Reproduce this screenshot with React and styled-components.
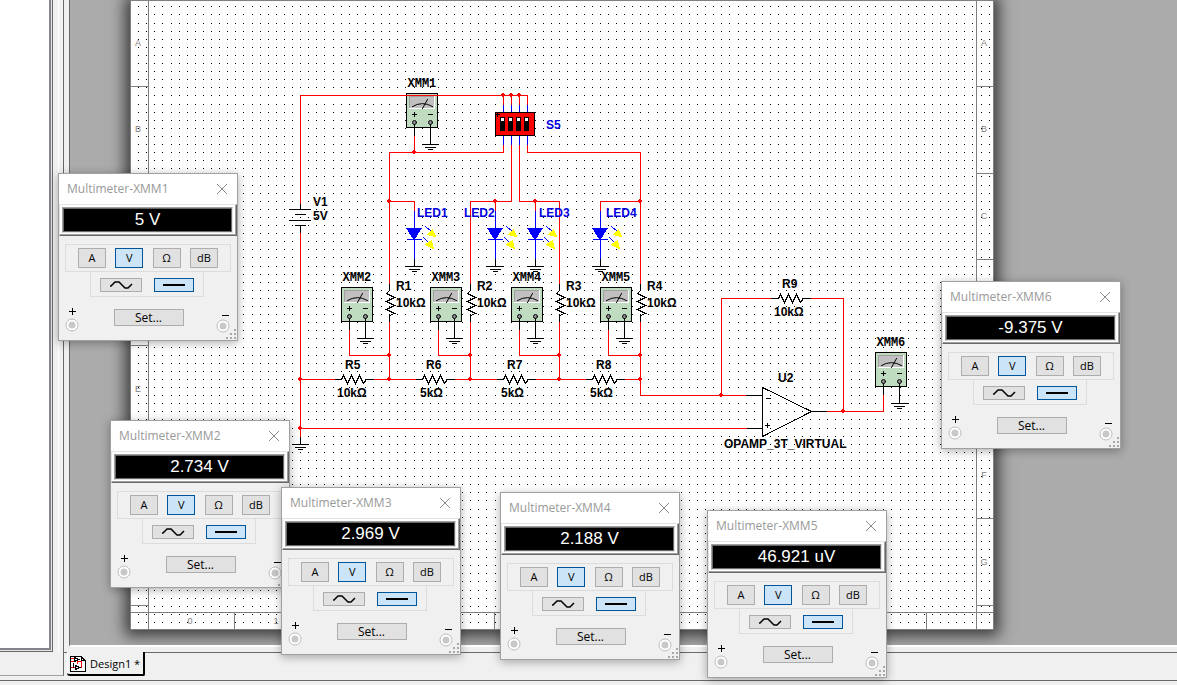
import React from "react";
import styled, { createGlobalStyle } from "styled-components";

const GlobalStyle = createGlobalStyle`
  * {
    box-sizing: border-box;
  }

  body {
    margin: 0;
    background: #f0f0f0;
    font-family: "Open Sans", "Noto Sans", sans-serif;
    font-size: 12px;
    color: #000;
  }
`;

const Page = styled.div`
  position: relative;
  display: flex;
  flex-direction: column;
  height: 100vh;
  overflow: hidden;
  background: #f0f0f0;
`;

const Columns = styled.div`
  display: flex;
  flex: 1;
  min-height: 0;
`;

const SidePane = styled.aside`
  width: 64px;
  flex-shrink: 0;
  margin-bottom: 4px;
  padding-bottom: 23px;
  border-right: 1px solid #696969;
  border-bottom: 1px solid #a0a0a0;
`;

const SideInner = styled.div`
  height: 100%;
  width: 59px;
  padding-right: 5px;
  border-right: 1px solid #fff;
`;

const SideList = styled.div`
  height: 100%;
  background: #fff;
  border: 1px solid #696969;
  border-width: 0 1px 1px 0;
  box-shadow: inset -1px -1px 0 #e3e3e3, inset -3px -3px 0 #84848c;
`;

const Main = styled.main`
  display: flex;
  flex-direction: column;
  flex: 1;
  min-width: 0;
`;

const Workspace = styled.div`
  flex: 1;
  min-height: 0;
  margin-left: 5px;
  padding-left: 60px;
  overflow: hidden;
  background: #ababab;
  border-left: 1px solid #696969;
  border-bottom: 2px solid #fff;
`;

const Sheet = styled.div`
  width: 864px;
  height: 630px;
  background: #fff;
  box-shadow: 0 1px 14px 5px rgba(0, 0, 0, 0.65);

  svg {
    display: block;
  }
`;

const TabBar = styled.nav`
  display: flex;
  height: 28px;
  margin-top: 5px;
  padding-left: 3px;
  background: linear-gradient(#696969, #696969) 0 0 / 100% 1px no-repeat;
`;

const Tab = styled.button`
  display: flex;
  align-items: center;
  gap: 3px;
  height: 24px;
  padding: 0 3px;
  font: inherit;
  font-size: 11px;
  white-space: nowrap;
  background: #f0f0f0;
  border: solid #000;
  border-width: 0 2px 2px 0;
  border-radius: 0 0 2px 3px;
  box-shadow: inset 1px 0 0 #fff;
`;

const StatusBar = styled.footer`
  height: 5px;
  border-top: 1px solid #696969;
`;

const MeterWindow = styled.section`
  position: absolute;
  left: ${props => props.$x}px;
  top: ${props => props.$y}px;
  width: 180px;
  height: 168px;
  display: flex;
  flex-direction: column;
  align-items: center;
  background: #f0f0f0;
  border: 1px solid #a0a0a0;
  box-shadow: 0 2px 9px rgba(0, 0, 0, 0.32);
`;

const TitleBar = styled.header`
  display: flex;
  align-items: center;
  justify-content: space-between;
  width: 100%;
  height: 30px;
  flex-shrink: 0;
  padding: 0 9px 0 8px;
  background: #fff;
`;

const Title = styled.h2`
  margin: 0;
  font-size: 12px;
  font-weight: 400;
  line-height: 16px;
  color: #999;
`;

const CloseButton = styled.button`
  display: flex;
  padding: 0;
  background: none;
  border: 0;
`;

const Display = styled.div`
  width: 100%;
  height: 32px;
  flex-shrink: 0;
  padding: 2px 3px 2px 2px;
  background: #fff;
  border: 1px solid;
  border-color: #e3e3e3 #696969 #696969 #e3e3e3;
  box-shadow: inset -1px -1px 0 #a0a0a0;
`;

const Reading = styled.output`
  display: flex;
  align-items: center;
  justify-content: center;
  height: 100%;
  font-family: "Liberation Sans", sans-serif;
  font-size: 17px;
  line-height: 20px;
  color: #fff;
  background: #000;
  border: 1px solid;
  border-color: #a0a0a0 #e3e3e3 #e3e3e3 #a0a0a0;
  box-shadow: inset 0 0 0 1px #696969;
`;

const Group = styled.div`
  display: flex;
  justify-content: space-between;
  flex-shrink: 0;
  border: 1px solid #dcdcdc;
`;

const UnitGroup = styled(Group)`
  width: 166px;
  height: 28px;
  margin-top: 8px;
  padding: 3px 12px;
`;

const SignalGroup = styled(Group)`
  width: 114px;
  height: 26px;
  margin: -1px 2px 0 0;
  padding: 6px 9px;
`;

const ToolButton = styled.button`
  display: flex;
  align-items: center;
  justify-content: center;
  width: ${props => props.$width}px;
  height: ${props => props.$height}px;
  padding: 0;
  font: inherit;
  font-size: ${props => props.$size || 12}px;
  line-height: 12px;
  background: ${props => (props.$active ? "#cce4f7" : "#e1e1e1")};
  border: 1px solid ${props => (props.$active ? "#00549a" : "#adadad")};
`;

const Footer = styled.div`
  display: flex;
  justify-content: space-between;
  width: 100%;
  padding: 7px 7px 0 6px;
`;

const SetSlot = styled.div`
  padding: 5px 0 0 2px;
`;

const Terminal = styled.div`
  display: flex;
  flex-direction: column;
  align-items: center;
`;

const Grip = styled.svg`
  position: absolute;
  right: 0;
  bottom: 0;
`;

const Label = styled.text`
  font-family: "Liberation Sans", sans-serif;
  font-size: 12px;
  font-weight: 700;
  fill: ${props => (props.$blue ? "#0000e0" : "#000")};
`;

const MeterLabel = styled(Label)`
  font-family: "Liberation Mono", monospace;
`;

const FrameLabel = styled.text`
  font-family: "Liberation Sans", sans-serif;
  font-size: 9px;
  fill: #808080;
  text-anchor: middle;
`;

const meters = [
  { name: "XMM1", value: "5 V", x: 58, y: 173 },
  { name: "XMM2", value: "2.734 V", x: 110, y: 420 },
  { name: "XMM3", value: "2.969 V", x: 281, y: 487 },
  { name: "XMM4", value: "2.188 V", x: 500, y: 492 },
  { name: "XMM5", value: "46.921 uV", x: 707, y: 510 },
  { name: "XMM6", value: "-9.375 V", x: 941, y: 281 }
];

const units = ["A", "V", "Ω", "dB"];

const frameLabels = [
  ["A", 138, 46], ["B", 138, 132], ["E", 138, 392],
  ["A", 984, 46], ["B", 984, 132], ["C", 984, 219],
  ["F", 984, 478], ["G", 984, 565],
  ["0", 190, 624], ["1", 276, 624]
];

const wires = [
  "M300 203V95H527V105",
  "M503 95V105M511 95V105M519 95V105",
  "M503 144V152H389V283",
  "M389 201H414V210",
  "M414 136V152",
  "M511 144V201H470V283",
  "M495 201V210",
  "M519 144V201H559V283",
  "M535 201V210",
  "M527 144V152H640V283",
  "M640 201H600V210",
  "M300 233V436",
  "M300 379H334M374 379H415M455 379H496M536 379H585M625 379H640",
  "M389 322V379M470 322V379M559 322V379",
  "M349 330V355H389M438 330V355H470M519 330V355H559M608 330V355H640",
  "M640 322V395H745",
  "M300 428H746",
  "M721 395V298H770M811 298H843V411",
  "M827 411H883V395"
];

const junctions = [
  [503, 95], [511, 95], [519, 95], [414, 152], [389, 201], [495, 201],
  [535, 201], [640, 201], [300, 379], [300, 428], [389, 355], [470, 355],
  [559, 355], [640, 355], [389, 379], [470, 379], [559, 379], [640, 379],
  [721, 395], [843, 411]
];

// grid pitch is 8.1px, each dot snapped to a whole pixel
const gridPath = () => {
  let d = "";
  for (let row = 0; row < 77; row++) {
    for (let col = 0; col < 106; col++) {
      const x = Math.floor(138.69 + col * 8.1);
      const y = Math.floor(6.81 + row * 8.1);
      d += `M${x} ${y}h1v1h-1z`;
    }
  }
  return d;
};

const grid = gridPath();

const Ground = ({ x, y }) => (
  <path d={`M${x - 8} ${y}h16M${x - 5} ${y + 3}h10M${x - 2} ${y + 5}h4`} />
);

const Resistor = ({ x, y, vertical }) =>
  vertical ? (
    <path d={`M${x} ${y}v7l-3 3l8 4l-8 4l8 4l-8 4l8 4l-5 2v7`} />
  ) : (
    <path d={`M${x} ${y}h7l2 -4l4 8l4 -8l4 8l4 -8l4 8l3 -4h7`} />
  );

const Led = ({ x }) => (
  <g>
    <path d={`M${x} 211V258`} stroke="#00f" />
    <path d={`M${x - 8} 228h16l-7 11h-2z`} fill="#00f" stroke="none" transform="translate(-0.5 -0.5)" />
    <path d={`M${x - 7} 228h14M${x - 7} 239h14`} stroke="#00f" />
    <path d={`M${x + 11} 226l6 5M${x + 9} 237l5 5`} stroke="#00f" />
    <path
      d={`M${x + 18} 229l3 7l-8 -2zM${x + 17} 240l2 8l-8 -4z`}
      fill="#ff0"
      stroke="#ff0"
    />
    <path d={`M${x} 259v7`} />
    <Ground x={x} y={266} />
  </g>
);

const MeterSymbol = ({ x, y, name }) => (
  <g>
    <rect x={x} y={y} width="31" height="34" fill="#c0dcc0" />
    <path d={`M${x + 3} ${y + 3}h25v12h-25z`} fill="#c0c0c0" stroke="#fff" />
    <path d={`M${x + 3} ${y + 14}V${y + 3}h24`} stroke="#a0a0a0" />
    <path
      d={`M${x + 6} ${y + 13}q10 -6 20 0M${x + 16} ${y + 15}l5 -9`}
      shapeRendering="auto"
    />
    <path d={`M${x + 6} ${y + 21}h4M${x + 8} ${y + 19}v4M${x + 22} ${y + 21}h4`} />
    <g fill="#909090" shapeRendering="auto">
      <circle cx={x + 8} cy={y + 29} r="2" />
      <circle cx={x + 24} cy={y + 29} r="2" />
    </g>
    <path d={`M${x + 8} ${y + 31}v12M${x + 24} ${y + 31}v20`} />
    <Ground x={x + 24} y={y + 51} />
    <MeterLabel x={x + 1} y={y - 7} stroke="none">
      {name}
    </MeterLabel>
  </g>
);

const Frame = () => (
  <g>
    <g fill="none" stroke="#808080" transform="translate(0.5 0.5)">
      <path d="M130 0H993V629H130zM148 0V629M976 0V629M130 612H993" />
      {[86, 173, 259, 345, 432, 518, 605].map(y => (
        <path key={y} d={`M130 ${y}h18M976 ${y}h17`} />
      ))}
      {[234, 321, 407, 494, 580, 667, 753, 840, 926].map(x => (
        <path key={x} d={`M${x} 612v17`} />
      ))}
    </g>
    {frameLabels.map(([text, x, y]) => (
      <FrameLabel key={`${x}-${y}`} x={x} y={y}>
        {text}
      </FrameLabel>
    ))}
  </g>
);

const Schematic = () => (
  <svg
    width="864"
    height="630"
    viewBox="130 0 864 630"
    shapeRendering="crispEdges"
    role="img"
    aria-label="Circuit schematic"
  >
    <Frame />
    <path d={grid} fill="#000" />
    <g fill="none" stroke="#000" strokeLinecap="square" transform="translate(0.5 0.5)">
      <MeterSymbol x={406} y={93} name="XMM1" />
      <MeterSymbol x={341} y={287} name="XMM2" />
      <MeterSymbol x={430} y={287} name="XMM3" />
      <MeterSymbol x={511} y={287} name="XMM4" />
      <MeterSymbol x={600} y={287} name="XMM5" />
      <MeterSymbol x={875} y={352} name="XMM6" />

      <path d="M300 203v6M289 209h21M295 214h10M289 220h21M295 225h10M300 225v8" />
      <path d="M300 437v7" />
      <Ground x={300} y={444} />

      <Led x={414} />
      <Led x={495} />
      <Led x={535} />
      <Led x={600} />

      {[389, 470, 559, 640].map(x => (
        <Resistor key={x} x={x} y={283} vertical />
      ))}
      {[334, 415, 496, 585].map(x => (
        <Resistor key={x} x={x} y={379} />
      ))}
      <Resistor x={771} y={298} />

      <path d="M746 395h16M747 428h15M811 411h16" />
      <path d="M762 387V436L811 411z" />
      <path d="M766 398h4M765 425h4M767 423v4" />

      <g stroke="#f00">
        {wires.map(d => (
          <path key={d} d={d} />
        ))}
      </g>
      <g fill="#f00" stroke="none" transform="translate(-0.5 -0.5)">
        {junctions.map(([x, y]) => (
          <path key={`${x}-${y}`} d={`M${x - 2} ${y - 1}h1v-1h2v1h1v2h-1v1h-2v-1h-1z`} />
        ))}
      </g>

      <path
        d="M503 105v7M511 105v7M519 105v7M527 105v7M503 136v8M511 136v8M519 136v8M527 136v8"
        stroke="#00f"
      />
      <rect x="495" y="112" width="39" height="23" fill="#f00" />
      <path d="M497 113v3M496 114h3" />
      <g stroke="none" transform="translate(-0.5 -0.5)">
        {[500, 508, 516, 524].map(x => (
          <g key={x}>
            <rect x={x} y="117" width="5" height="14" fill="#000" />
            <rect x={x + 1} y="118" width="3" height="3" fill="#fff" />
          </g>
        ))}
      </g>
    </g>

    <Label x="313" y="206">V1</Label>
    <Label x="313" y="220">5V</Label>
    <Label x="546" y="129" $blue>S5</Label>
    <Label x="417" y="217" $blue>LED1</Label>
    <Label x="464" y="217" $blue>LED2</Label>
    <Label x="539" y="217" $blue>LED3</Label>
    <Label x="606" y="217" $blue>LED4</Label>
    {[396, 477, 566, 647].map((x, i) => (
      <g key={x}>
        <Label x={x} y="290">R{i + 1}</Label>
        <Label x={x} y="307">10kΩ</Label>
      </g>
    ))}
    <Label x="345" y="369">R5</Label>
    <Label x="337" y="397">10kΩ</Label>
    <Label x="426" y="369">R6</Label>
    <Label x="420" y="397">5kΩ</Label>
    <Label x="507" y="369">R7</Label>
    <Label x="501" y="397">5kΩ</Label>
    <Label x="596" y="369">R8</Label>
    <Label x="590" y="397">5kΩ</Label>
    <Label x="782" y="288">R9</Label>
    <Label x="774" y="316">10kΩ</Label>
    <Label x="778" y="382">U2</Label>
    <Label x="724" y="448">OPAMP_3T_VIRTUAL</Label>
  </svg>
);

const Socket = () => (
  <svg width="14" height="14" viewBox="0 0 14 14">
    <circle cx="7" cy="7" r="6" fill="#fff" stroke="#bcbcbc" />
    <circle cx="7" cy="7" r="3.5" fill="#c8c8c8" />
  </svg>
);

const Multimeter = ({ name, value, x, y }) => (
  <MeterWindow $x={x} $y={y}>
    <TitleBar>
      <Title>Multimeter-{name}</Title>
      <CloseButton aria-label="Close">
        <svg width="12" height="12" viewBox="0 0 12 12" stroke="#8a8a8a">
          <path d="M1 1l10 10M11 1L1 11" />
        </svg>
      </CloseButton>
    </TitleBar>
    <Display>
      <Reading>{value}</Reading>
    </Display>
    <UnitGroup>
      {units.map(unit => (
        <ToolButton key={unit} $width={28} $height={20} $size={11} $active={unit === "V"}>
          {unit}
        </ToolButton>
      ))}
    </UnitGroup>
    <SignalGroup>
      <ToolButton $width={42} $height={14} aria-label="AC">
        <svg width="24" height="10" viewBox="0 0 24 10" fill="none" stroke="#000" strokeWidth="1.5">
          <path d="M1 6h1l4 -4h4l6 6h3l4 -4" />
        </svg>
      </ToolButton>
      <ToolButton $width={40} $height={14} $active aria-label="DC">
        <svg width="22" height="2" viewBox="0 0 22 2">
          <path d="M0 0h22v2H0z" />
        </svg>
      </ToolButton>
    </SignalGroup>
    <Footer>
      <Terminal>
        <svg width="14" height="14" viewBox="0 0 14 14" stroke="#000" shapeRendering="crispEdges">
          <path d="M4 7.5h7M7.500 4v7" />
        </svg>
        <Socket />
      </Terminal>
      <SetSlot>
        <ToolButton $width={70} $height={17}>Set...</ToolButton>
      </SetSlot>
      <Terminal>
        <svg width="14" height="15" viewBox="0 0 14 15" stroke="#000" shapeRendering="crispEdges">
          <path d="M6 11.500h7" />
        </svg>
        <Socket />
      </Terminal>
    </Footer>
    <Grip width="12" height="12" viewBox="0 0 12 12" fill="#a8a8a8" aria-hidden="true">
      <path d="M9 1h2v2h-2zM5 5h2v2h-2zM9 5h2v2h-2zM1 9h2v2h-2zM5 9h2v2h-2zM9 9h2v2h-2z" />
    </Grip>
  </MeterWindow>
);

const DesignIcon = () => (
  <svg width="17" height="17" viewBox="0 0 17 17" fill="none" stroke="#000" shapeRendering="crispEdges">
    <path d="M0.500 1.500H11L15.500 6V16.500H0.500z" fill="#fff" />
    <path d="M11.500 1.500V5.500H15.500" />
    <path d="M1 3.500h4M1 6.500h3M7.500 5v4M8 6.500h3v6M1 12.500h4" stroke="#f00" />
    <path d="M4.500 2.500v4l4 -2zM5.500 10.500v4l4 -2zM3.500 8v5" />
  </svg>
);

const App = () => (
  <>
    <GlobalStyle />
    <Page>
      <Columns>
        <SidePane>
          <SideInner>
            <SideList />
          </SideInner>
        </SidePane>
        <Main>
          <Workspace>
            <Sheet>
              <Schematic />
            </Sheet>
          </Workspace>
          <TabBar>
            <Tab>
              <DesignIcon />
              Design1 *
            </Tab>
          </TabBar>
        </Main>
      </Columns>
      <StatusBar />
      {meters.map(meter => (
        <Multimeter key={meter.name} {...meter} />
      ))}
    </Page>
  </>
);

export default App;
